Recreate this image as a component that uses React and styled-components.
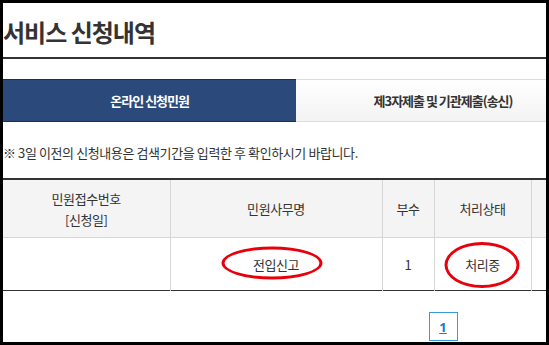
import styled, { createGlobalStyle } from "styled-components";

const GlobalStyle = createGlobalStyle`
  html, body {
    margin: 0;
    padding: 0;
    background: #000;
  }
  body {
    font-family: "Noto Sans CJK KR", "Noto Sans", sans-serif;
    color: #333;
  }
`

const Frame = styled.div`
  margin: 3px;
  width: 543px;
  height: 339px;
  background: #fff;
  overflow: hidden;
`

const Page = styled.div`
  width: 880px;
`

const Title = styled.h2`
  margin: 0;
  padding: 14px 0 10px;
  font-size: 24px;
  line-height: 30px;
  font-weight: 700;
  letter-spacing: -1px;
  color: #333;
  border-bottom: 2px solid #333;
`

const Tabs = styled.ul`
  display: flex;
  list-style: none;
  margin: 20px 0 0;
  padding: 0;
`

const Tab = styled.li`
  flex: 1;
  height: 43px;
  box-sizing: border-box;
  display: flex;
  align-items: center;
  justify-content: center;
  font-size: 13px;
  font-weight: 700;
  letter-spacing: -1px;
  color: ${p => (p.$active ? "#fff" : "#333")};
  background: ${p => (p.$active ? "#2b4a7b" : "linear-gradient(#fff, #f3f3f3)")};
  border: 1px solid ${p => (p.$active ? "#1b2f50" : "#dcdcdc")};
  border-left: none;
  border-right: none;
`

const Notice = styled.p`
  margin: 21px 0 15px;
  font-size: 13px;
  line-height: 20px;
  letter-spacing: -0.4px;
  color: #333;
`

const Table = styled.table`
  width: 100%;
  border-collapse: collapse;
  table-layout: fixed;
  border-top: 2px solid #333;
  border-bottom: 1px solid #333;
  font-size: 13px;
  letter-spacing: -0.4px;

  th, td {
    border-left: 1px solid #d6d6d6;
    text-align: center;
    vertical-align: middle;
    padding: 0;
  }
  th:first-child, td:first-child {
    border-left: none;
  }
`

const HeadCell = styled.th`
  height: 57px;
  background: #f4f4f4;
  font-weight: 400;
  line-height: 21px;
  color: #333;
  border-bottom: 1px solid #d6d6d6;
`

const Cell = styled.td`
  height: 52px;
  color: #333;
`

const Circled = styled.span`
  position: relative;
  display: inline-block;

  &::after {
    content: "";
    position: absolute;
    left: 50%;
    top: 50%;
    width: ${p => p.$w}px;
    height: ${p => p.$h}px;
    box-sizing: border-box;
    border: 3px solid #e8000b;
    border-radius: 50%;
    transform: translate(calc(-50% + ${p => p.$dx}px), calc(-50% + ${p => p.$dy}px));
  }
`

const Paging = styled.div`
  display: flex;
  justify-content: center;
  margin-top: 21px;
`

const PageLink = styled.a`
  width: 29px;
  height: 29px;
  box-sizing: border-box;
  display: flex;
  align-items: center;
  justify-content: center;
  border: 1px solid #3a9ad9;
  color: #1a7acb;
  font-size: 13px;
  font-weight: 700;
  text-decoration: underline;
  font-family: "Noto Sans", sans-serif;
`

const App = () => {
  return (
    <>
      <GlobalStyle />
      <Frame>
        <Page>
          <Title>서비스 신청내역</Title>

          <Tabs>
            <Tab $active>온라인 신청민원</Tab>
            <Tab>제3자제출 및 기관제출(송신)</Tab>
            <Tab />
          </Tabs>

          <Notice>※ 3일 이전의 신청내용은 검색기간을 입력한 후 확인하시기 바랍니다.</Notice>

          <Table>
            <colgroup>
              <col style={{ width: 167 }} />
              <col style={{ width: 212 }} />
              <col style={{ width: 52 }} />
              <col style={{ width: 97 }} />
              <col />
            </colgroup>
            <thead>
              <tr>
                <HeadCell>민원접수번호<br />[신청일]</HeadCell>
                <HeadCell>민원사무명</HeadCell>
                <HeadCell>부수</HeadCell>
                <HeadCell>처리상태</HeadCell>
                <HeadCell />
              </tr>
            </thead>
            <tbody>
              <tr>
                <Cell />
                <Cell>
                  <Circled $w={101} $h={33} $dx={-4} $dy={-1}>전입신고</Circled>
                </Cell>
                <Cell>1</Cell>
                <Cell>
                  <Circled $w={75} $h={46} $dx={-1} $dy={1}>처리중</Circled>
                </Cell>
                <Cell />
              </tr>
            </tbody>
          </Table>

          <Paging>
            <PageLink>1</PageLink>
          </Paging>
        </Page>
      </Frame>
    </>
  )
}

export default App
